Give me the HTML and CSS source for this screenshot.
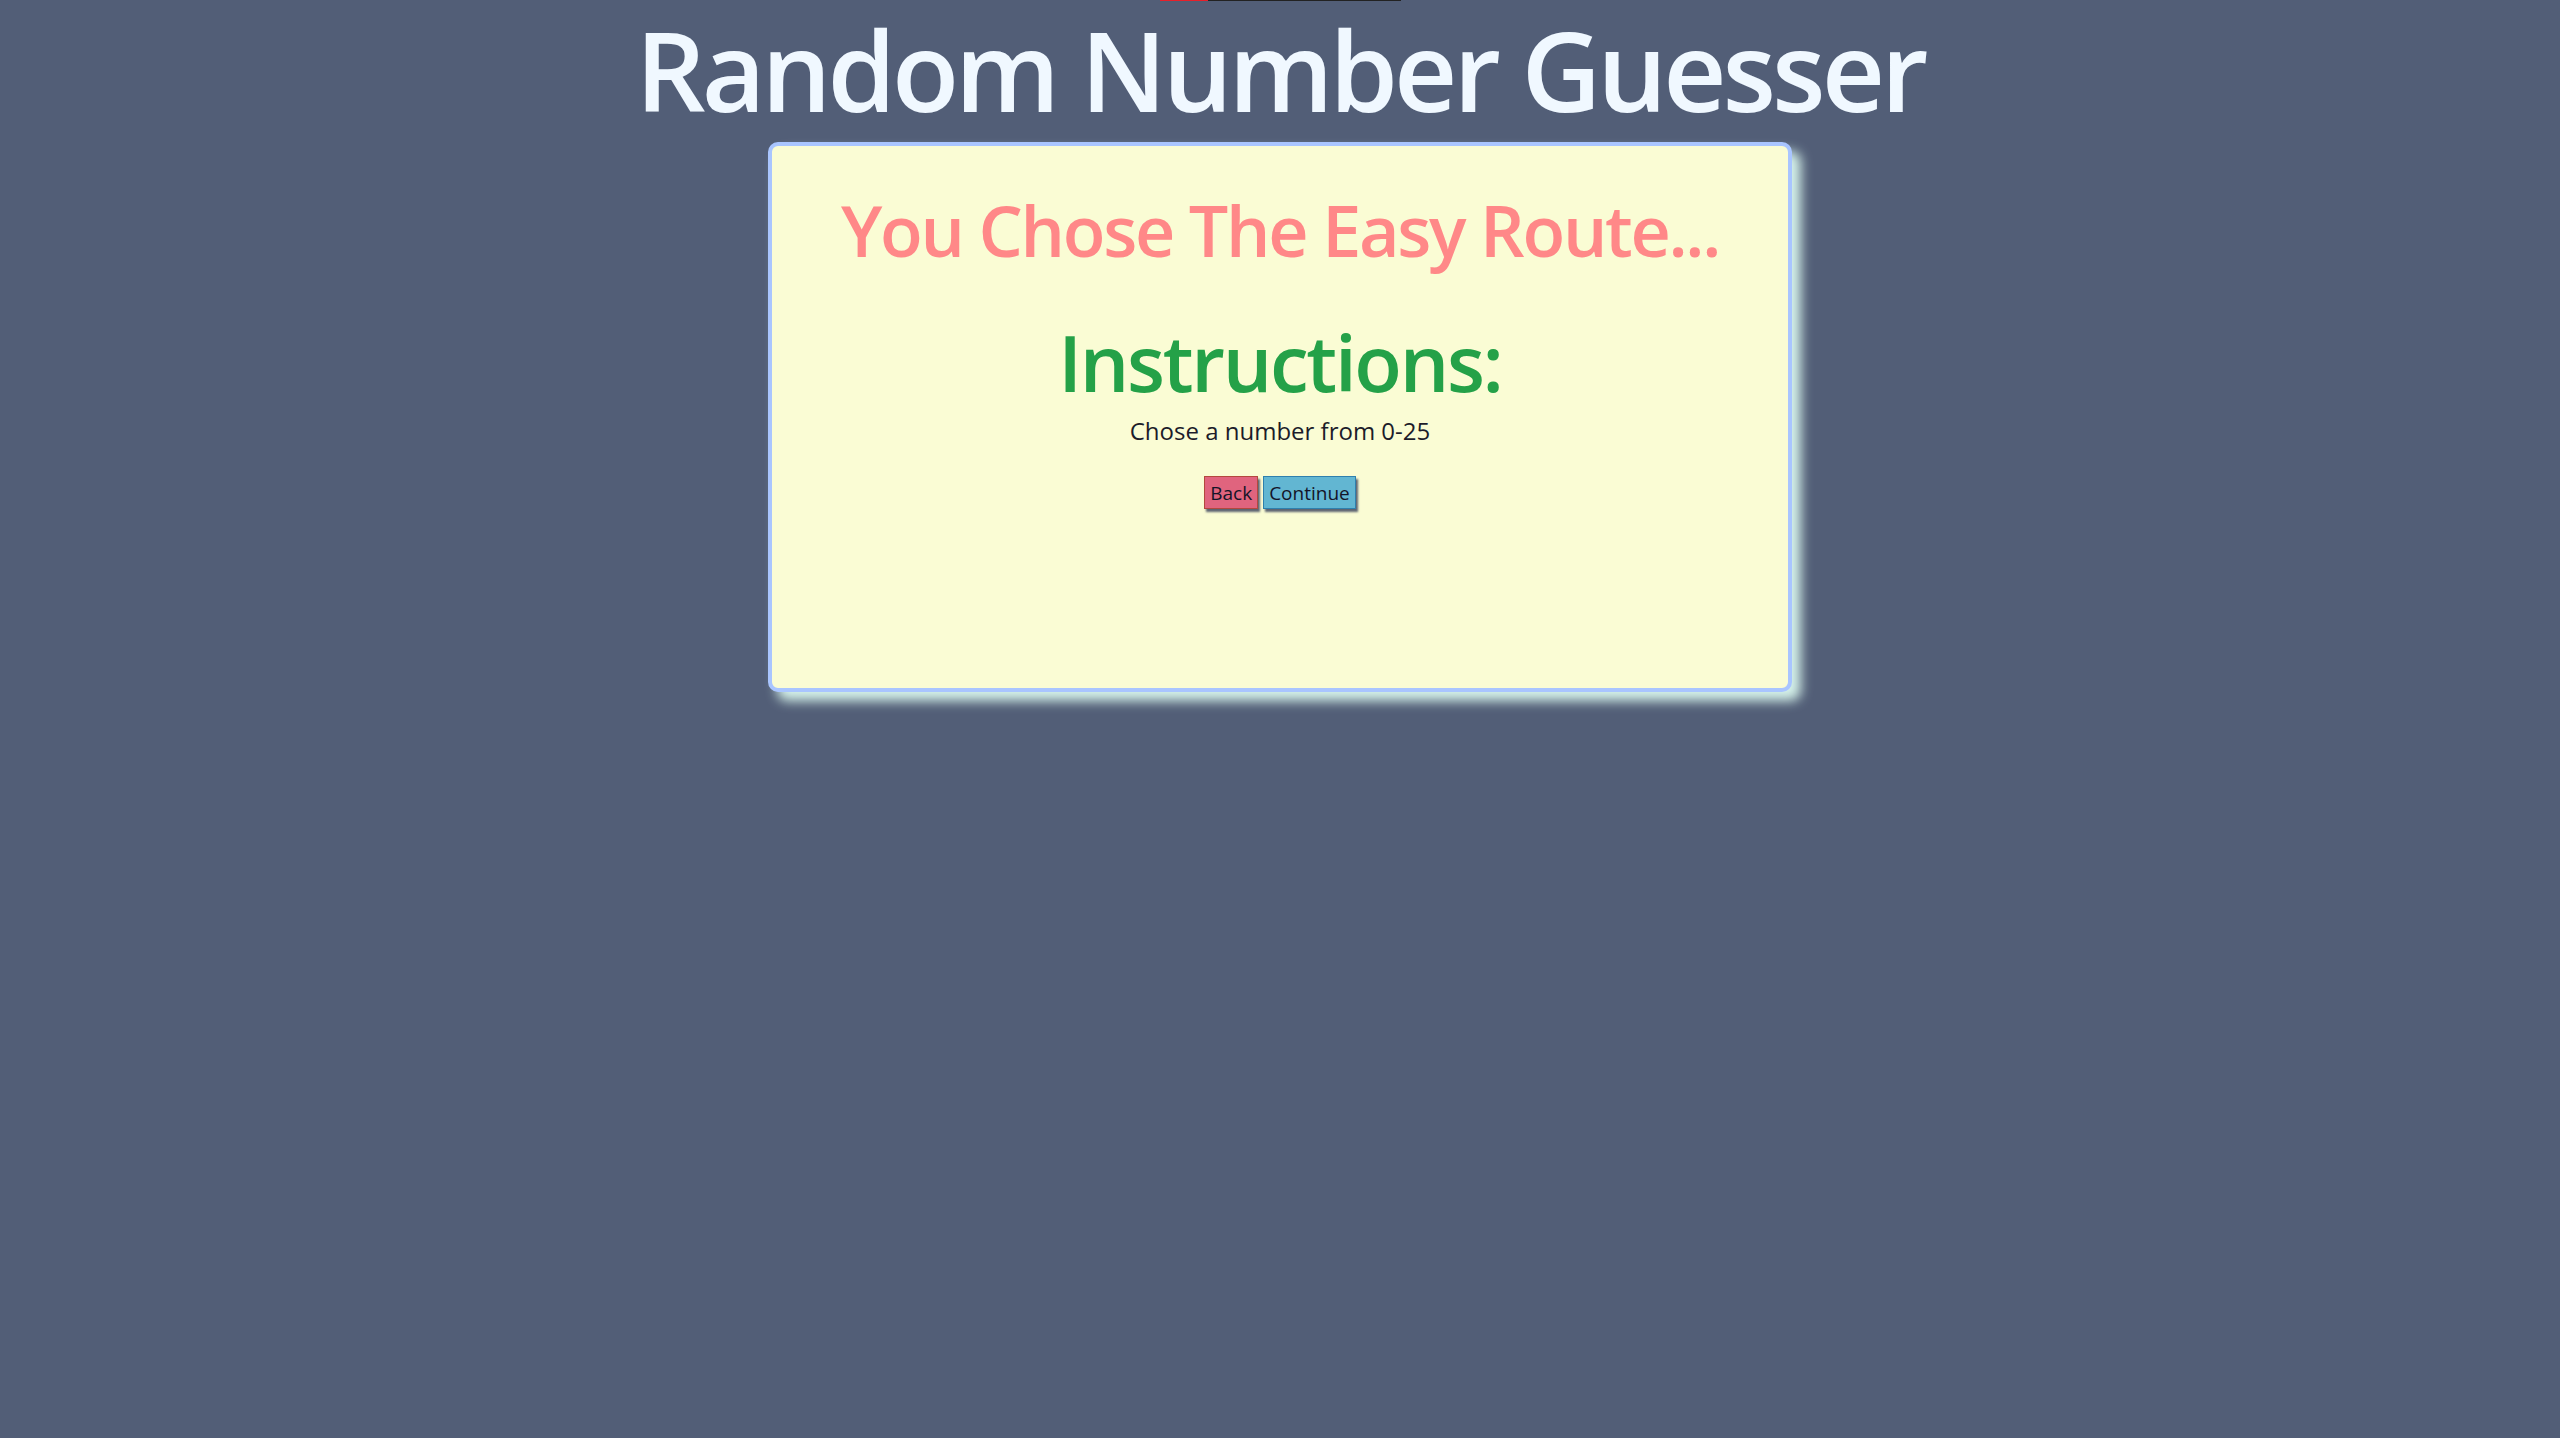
FILE: index.html
```html
<!DOCTYPE html>
<html lang="en">
<head>
<meta charset="utf-8">
<title>Random Number Guesser</title>
<link rel="stylesheet" href="styles.css">
</head>
<body>
<div class="topbar"><div class="topbar-fill"></div></div>
<h1 class="title">Random Number Guesser</h1>
<main class="card">
  <h2 class="route">You Chose The Easy Route...</h2>
  <h2 class="instructions">Instructions:</h2>
  <p class="desc">Chose a number from 0-25</p>
  <div class="actions">
    <button class="btn btn-back">Back</button>
    <button class="btn btn-continue">Continue</button>
  </div>
</main>
</body>
</html>
```

FILE: styles.css
```css
html, body {
  margin: 0;
  padding: 0;
}
body {
  background: #525e77;
  font-family: "Open Sans", "Noto Sans", sans-serif;
  min-height: 1438px;
}
.topbar {
  width: 241px;
  height: 1px;
  margin: 0 auto;
  background: #222222;
  display: flex;
}
.topbar-fill {
  width: 48px;
  background: #e8202a;
}
.title {
  margin: 8px 0 0;
  text-align: center;
  color: #f0f8ff;
  font-size: 110px;
  line-height: 120px;
  font-weight: 600;
  letter-spacing: -4px;
}
.card {
  box-sizing: border-box;
  width: 1024px;
  height: 550px;
  margin: 13px auto 0;
  background: #fafcd4;
  border: 4px solid #a9c5ff;
  border-radius: 10px;
  box-shadow: 9px 9px 12px rgba(220, 250, 240, 0.95);
  text-align: center;
  padding-top: 42px;
}
.route {
  margin: 0;
  color: #ff8888;
  font-size: 70px;
  line-height: 84px;
  font-weight: 600;
  letter-spacing: -2.3px;
}
.instructions {
  margin: 43px 0 0;
  color: #24a148;
  font-size: 78px;
  line-height: 94px;
  font-weight: 600;
  letter-spacing: -2.3px;
}
.desc {
  margin: 7px 0 0;
  color: #1c1c2a;
  font-size: 24px;
  line-height: 30px;
}
.actions {
  margin-top: 30px;
  display: flex;
  justify-content: center;
  gap: 5px;
}
.btn {
  box-sizing: border-box;
  height: 33px;
  padding: 0 5px;
  font-family: inherit;
  font-size: 19px;
  color: #141428;
  border-radius: 0;
  box-shadow: 2px 3px 2px rgba(40, 50, 80, 0.75);
  cursor: pointer;
}
.btn-back {
  background: #e0647e;
  border: 1px solid #b4483e;
}
.btn-continue {
  background: #62b6d2;
  border: 1px solid #2e80ae;
}
```
